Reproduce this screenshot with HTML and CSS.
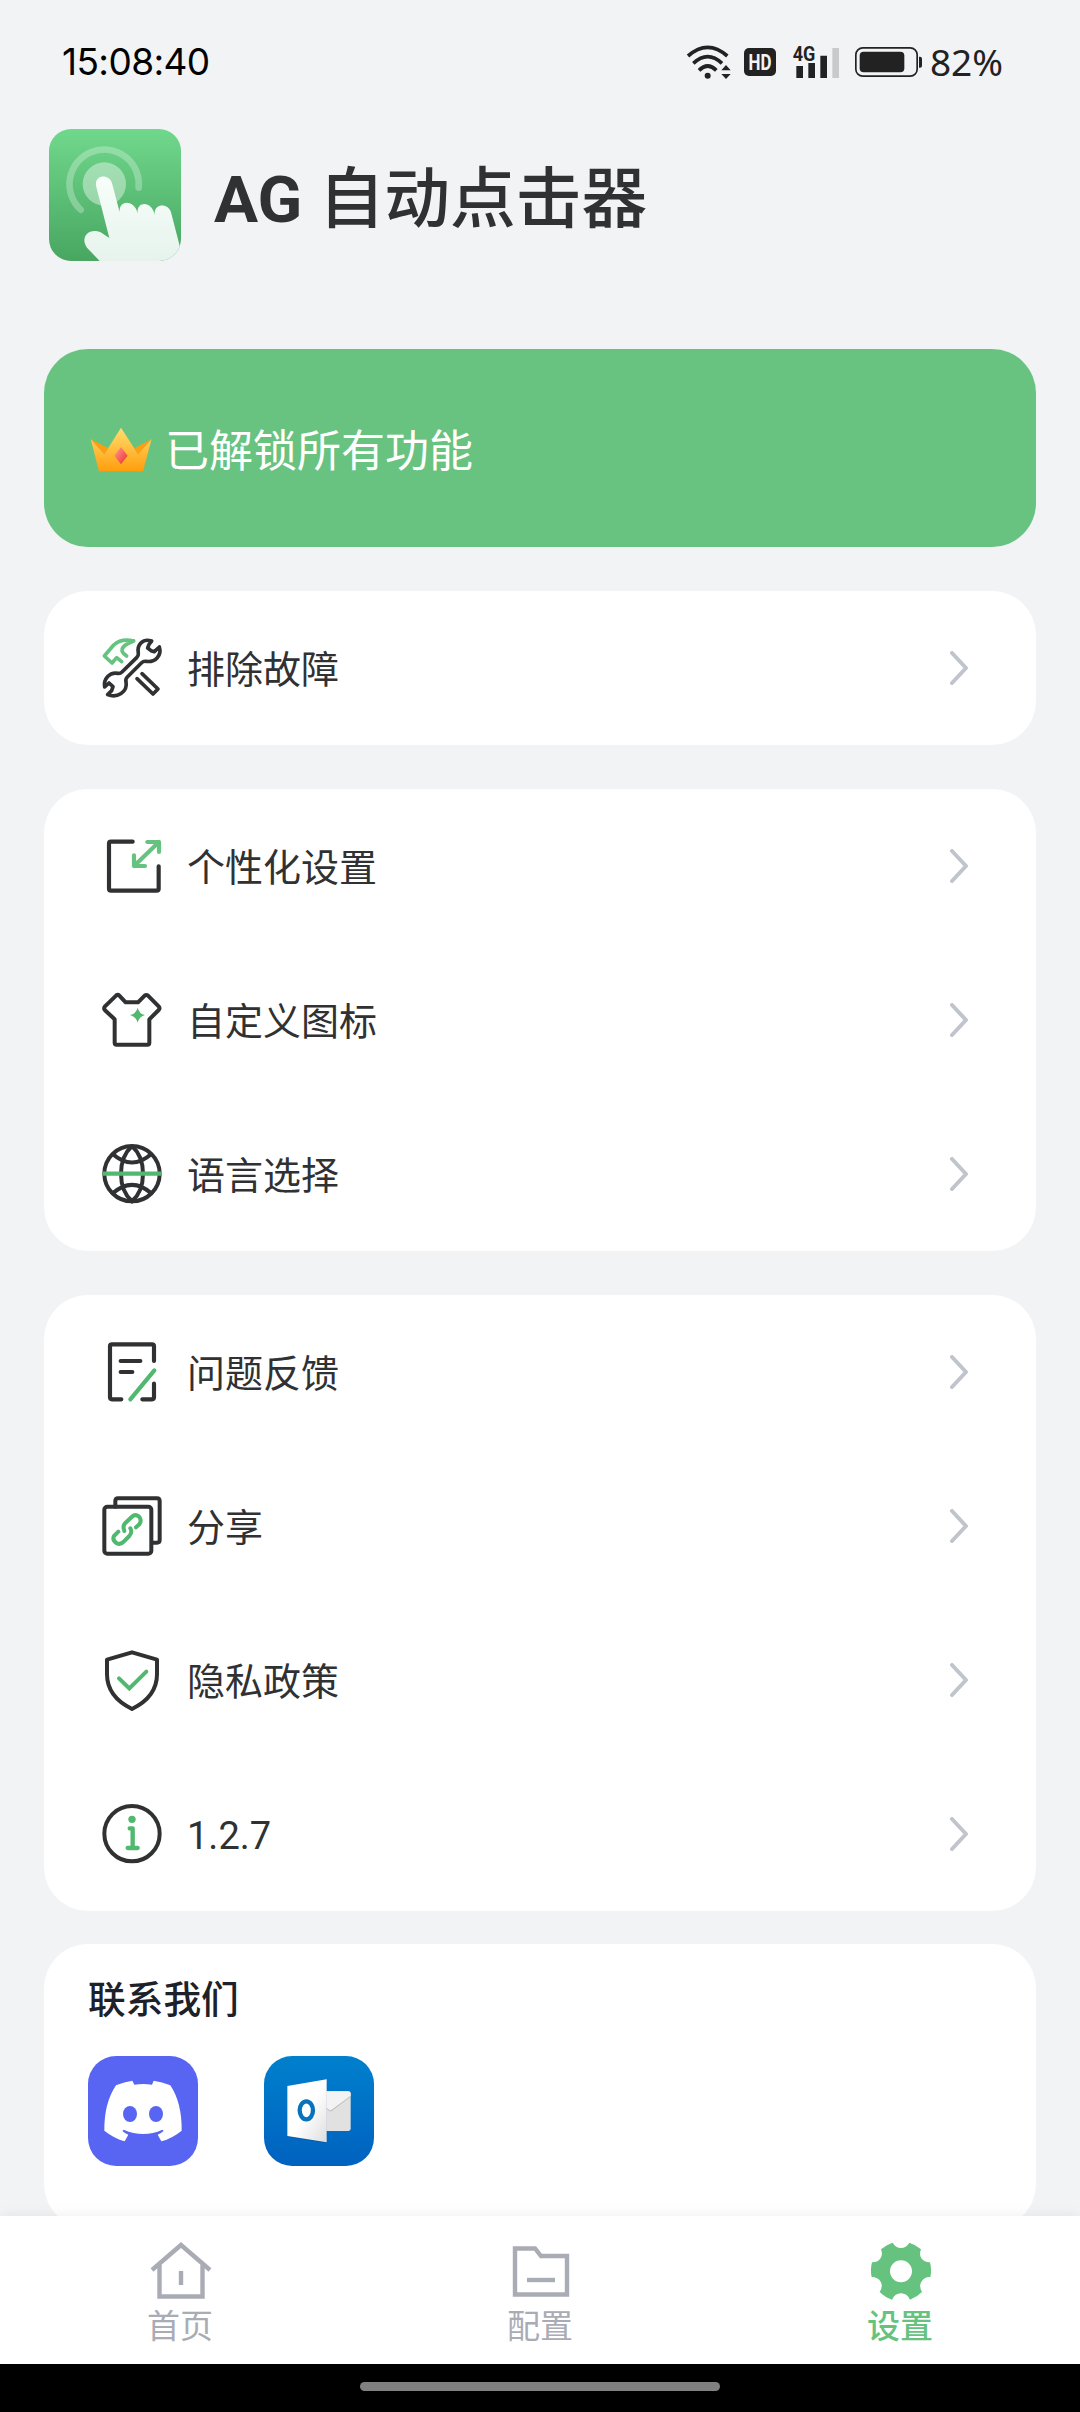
FILE: index.html
```html
<!DOCTYPE html>
<html lang="zh-CN">
<head>
<meta charset="utf-8">
<title>AG 自动点击器</title>
<link rel="stylesheet" href="styles.css">
</head>
<body>
<div class="status">
  <span class="time">15:08:40</span>
  <div class="status-icons">
    <svg class="wifi" width="44" height="36" viewBox="84 69 132 108">
      <g fill="none" stroke="#222" stroke-width="11"><path d="M87 105Q146 53 205 105"/><path d="M103 127Q146 87 189 127"/><path d="M120 148Q146 122 172 148"/></g>
      <circle cx="146" cy="164" r="9" fill="#222"/><path d="M187 148L201 132L215 148ZM187 159L201 174L215 159Z" fill="#222"/>
    </svg>
    <svg class="hd" width="32" height="28" viewBox="0 0 32 28"><rect width="32" height="28" rx="5" fill="#222"/><text x="16" y="21.500" textLength="23" lengthAdjust="spacingAndGlyphs" class="hd-text">HD</text></svg>
    <svg class="signal" width="46" height="34" viewBox="402 72 138 102"><path d="M412 135h20v36h-20zM448 126h20v45h-20zM484 104h20v67h-20z" fill="#222"/><path d="M520 81h20v90h-20z" fill="#c9cacc"/><text x="401" y="120" textLength="68" lengthAdjust="spacingAndGlyphs" class="net-text">4G</text></svg>
    <svg class="battery" width="67" height="30" viewBox="588 81 201 90"><rect x="590.500" y="83.500" width="184" height="85" rx="21" fill="none" stroke="#222" stroke-width="5"/><rect x="602" y="95" width="134" height="62" rx="12" fill="#222"/><path d="M780 110h3q6 0 6 6v21q0 6-6 6h-3z" fill="#222"/></svg>
    <span class="percent">82%</span>
  </div>
</div>

<header class="header">
  <svg class="app-icon" viewBox="57 87 396 396">
    <defs>
      <linearGradient id="appbg" x1="0" y1="0" x2="0" y2="1"><stop offset="0" stop-color="#70d88c"/><stop offset="1" stop-color="#48a661"/></linearGradient>
      <linearGradient id="hand" x1="0" y1="0" x2="0" y2="1"><stop offset="0" stop-color="#f8fefa"/><stop offset="1" stop-color="#e6f3ec"/></linearGradient>
    </defs>
    <rect x="57" y="87" width="396" height="396" fill="url(#appbg)"/>
    <circle cx="223" cy="252" r="65" fill="#fff" fill-opacity=".4"/>
    <path d="M152 329A104 104 0 1 1 326 263" fill="none" stroke="#fff" stroke-opacity=".28" stroke-width="20" stroke-linecap="round"/>
    <path d="M198 257C193 225 236 219 246 249L269 337C265 300 314 297 323 341C318 303 366 301 374 345C370 308 416 309 423 337L449 437V483H209L171 443C149 413 176 381 212 397L238 414Z" fill="url(#hand)"/>
    <path d="M449 437L453 425V483H449Z" fill="#e8f4ed"/>
  </svg>
  <h1 class="title"><span class="brand">AG</span> 自动点击器</h1>
</header>

<main class="content">
  <section class="banner">
    <svg class="crown" width="62" height="46" viewBox="151 255 186 138">
      <defs>
        <linearGradient id="gold" x1="0" y1="0" x2="0" y2="1"><stop offset="0" stop-color="#ffdf70"/><stop offset="1" stop-color="#ff9d0c"/></linearGradient>
        <linearGradient id="ruby" x1="0" y1="0" x2="1" y2="1"><stop offset=".2" stop-color="#ff8585"/><stop offset=".9" stop-color="#e93a2f"/></linearGradient>
      </defs>
      <path d="M178 388L153 291L194 336L244 257L295 336L336 291L310 388Z" fill="url(#gold)"/>
      <path d="M153 291L206 319L194 336ZM336 291L284 319L295 336Z" fill="#fd9e13"/>
      <path d="M244 315L264 341L244 367L224 341Z" fill="url(#ruby)"/>
    </svg>
    <span class="banner-text">已解锁所有功能</span>
  </section>

  <section class="card">
    <div class="row">
      <svg class="icon" viewBox="57 135 198 198">
        <g fill="none" stroke-linecap="round" stroke-linejoin="round" stroke-width="11">
          <path class="g" d="M161 153C130 145 111 156 101 165L73 198L96 219L110 203L125 215M161 153C143 160 127 167 126 180Q125 187 140 198"/>
          <path class="d" d="M215 153C188 144 170 165 175 190Q176 197 170 203L126 246Q121 251 114 250C87 246 70 268 74 291L87 279L99 290L95 302L83 314C111 325 144 307 138 275Q136 267 142 261L184 219Q190 213 198 214C227 218 246 195 238 171L223 185L213 182L203 174L207 163Z"/>
          <path class="d" d="M186 251L234 297L219 312L171 266"/>
        </g>
      </svg>
      <span class="label">排除故障</span>
      <svg class="chev" viewBox="0 0 20 34"><path d="M3 2L17 17L3 32"/></svg>
    </div>
  </section>

  <section class="card">
    <div class="row">
      <svg class="icon" viewBox="57 729 198 198">
        <g fill="none" stroke-linecap="round" stroke-linejoin="round" stroke-width="12.500">
          <path class="d" d="M158 755H93Q87 755 87 761V896Q87 902 93 902H230Q236 902 236 896V829"/>
          <path class="g" d="M202 756H237V786M237 756L162 828M162 796V828H195"/>
        </g>
      </svg>
      <span class="label">个性化设置</span>
      <svg class="chev" viewBox="0 0 20 34"><path d="M3 2L17 17L3 32"/></svg>
    </div>
    <div class="row">
      <svg class="icon" viewBox="57 51 198 198">
        <path class="d" fill="none" stroke-width="12" stroke-linejoin="round" d="M109 76Q114 73 118 77L137 97H174L194 77Q199 73 204 77L236 109Q241 115 236 120L208 148V218Q208 224 202 224H110Q104 224 104 218V148L75 121Q70 115 75 109Z"/>
        <path d="M173 113Q177 131 195 135Q177 140 173 158Q168 140 150 135Q168 131 173 113Z" fill="#50b86f"/>
      </svg>
      <span class="label">自定义图标</span>
      <svg class="chev" viewBox="0 0 20 34"><path d="M3 2L17 17L3 32"/></svg>
    </div>
    <div class="row">
      <svg class="icon" viewBox="57 513 198 198">
        <g class="d" fill="none" stroke-width="12">
          <circle cx="156" cy="611" r="83"/><path d="M156 528C112 568 112 654 156 694C200 654 200 568 156 528M98 552Q156 603 214 552M98 670Q156 619 214 670"/>
        </g>
        <path d="M68 611H245" stroke="#50b86f" stroke-width="13"/>
      </svg>
      <span class="label">语言选择</span>
      <svg class="chev" viewBox="0 0 20 34"><path d="M3 2L17 17L3 32"/></svg>
    </div>
  </section>

  <section class="card">
    <div class="row">
      <svg class="icon" viewBox="57 87 198 198">
        <g fill="none" stroke-linecap="round" stroke-linejoin="round" stroke-width="12.500">
          <path class="d" d="M124 268H96Q90 268 90 262V109Q90 103 96 103H216Q222 103 222 109V153M222 221V262Q222 268 216 268H187M122 153H181M122 186H157"/>
          <path class="g2" d="M223 181L151 268"/>
        </g>
      </svg>
      <span class="label">问题反馈</span>
      <svg class="chev" viewBox="0 0 20 34"><path d="M3 2L17 17L3 32"/></svg>
    </div>
    <div class="row">
      <svg class="icon" viewBox="57 549 198 198">
        <g fill="none" stroke-linecap="round" stroke-linejoin="round" stroke-width="12">
          <path class="d" d="M106 590V573Q106 565 114 565H231Q239 565 239 573V690Q239 698 231 698H216"/><rect class="d" x="73" y="590" width="141" height="141" rx="9"/>
          <path class="g2" d="M133 663Q127 648 136 639L155 621Q166 611 176 619Q187 629 178 643L168 652M151 655Q158 667 148 678L132 694Q121 706 109 699Q96 690 102 678L115 665"/>
        </g>
      </svg>
      <span class="label">分享</span>
      <svg class="chev" viewBox="0 0 20 34"><path d="M3 2L17 17L3 32"/></svg>
    </div>
    <div class="row">
      <svg class="icon" viewBox="57 81 198 198">
        <path class="d" fill="none" stroke-width="12" stroke-linejoin="round" d="M156 97L231 119V163C231 215 197 247 156 267C115 247 81 215 81 163V119Z"/>
        <path class="g2" fill="none" stroke-width="12" stroke-linecap="round" d="M117 175L148 205L199 155"/>
      </svg>
      <span class="label">隐私政策</span>
      <svg class="chev" viewBox="0 0 20 34"><path d="M3 2L17 17L3 32"/></svg>
    </div>
    <div class="row">
      <svg class="icon" viewBox="57 543 198 198">
        <circle class="d" cx="156" cy="641" r="83" fill="none" stroke-width="12"/><circle cx="156" cy="598" r="11" fill="#50b86f"/>
        <path class="g2" fill="none" stroke-width="13" stroke-linecap="round" stroke-linejoin="round" d="M149 625H158V684M143 684H173"/>
      </svg>
      <span class="label">1.2.7</span>
      <svg class="chev" viewBox="0 0 20 34"><path d="M3 2L17 17L3 32"/></svg>
    </div>
  </section>

  <section class="card contact">
    <h2 class="contact-title">联系我们</h2>
    <div class="apps">
      <svg class="app" viewBox="174 408 330 330">
        <rect x="174" y="408" width="330" height="330" fill="#5865f2"/>
        <path fill="#fff" d="M258 496Q283 485 307 482L313 494Q340 490 366 494L371 482Q396 485 421 496Q456 549 455 632Q427 655 394 664L383 644Q394 639 401 633L397 629Q340 655 281 629L277 633Q284 639 295 644L284 664Q252 655 223 632Q222 550 258 496Z"/>
        <ellipse cx="300" cy="582" rx="21" ry="24" fill="#5865f2"/><ellipse cx="378" cy="582" rx="21" ry="24" fill="#5865f2"/>
      </svg>
      <svg class="app" viewBox="702 408 330 330">
        <defs>
          <linearGradient id="outbg" x1="0" y1="0" x2="0" y2="1"><stop offset="0" stop-color="#0080cd"/><stop offset="1" stop-color="#0062bf"/></linearGradient>
          <linearGradient id="door" x1="0" y1="0" x2="1" y2="1"><stop offset=".5" stop-color="#fff"/><stop offset="1" stop-color="#dedede"/></linearGradient>
        </defs>
        <rect x="702" y="408" width="330" height="330" fill="url(#outbg)"/>
        <rect x="870" y="514" width="92" height="119" rx="8" fill="#e1e1e1"/>
        <path d="M882 514H954Q962 514 962 522V530L905 573Q901 575 897 572L882 561Z" fill="#bbb"/>
        <path d="M882 514H954Q962 514 962 522V527L905 569Q901 572 897 569L882 558Z" fill="#f3f3f3"/>
        <path d="M772 500L890 481V670L772 651Z" fill="#003f86" fill-opacity=".3"/>
        <path d="M772 498L890 478V667L772 648Z" fill="url(#door)"/>
        <ellipse cx="829" cy="571" rx="20" ry="27" fill="none" stroke="#0873bd" stroke-width="13"/>
      </svg>
    </div>
  </section>
</main>

<nav class="nav">
  <div class="tab">
    <svg class="tab-icon" viewBox="0 0 62 60"><g fill="none" stroke="#a9acb4" stroke-width="4.400"><path d="M2 29L31 4L60 29"/><path d="M9.500 24V55.500H52.500V24"/><path d="M31 30V44"/></g></svg>
    <span>首页</span>
  </div>
  <div class="tab">
    <svg class="tab-icon" viewBox="0 0 62 60"><g fill="none" stroke="#a9acb4" stroke-width="4.400"><path d="M5 7.500H25L31 15H57V53.500H5Z"/><path d="M17 39H45"/></g></svg>
    <span>配置</span>
  </div>
  <div class="tab active">
    <svg class="tab-icon" viewBox="150 122 186 180">
      <path fill="#66c37f" fill-rule="evenodd" d="M183 147Q198 133 218 127Q227 143 243 143Q259 143 268 127Q288 133 303 147Q297 163 304 174Q314 187 330 186Q336 208 331 230Q313 229 304 244Q296 258 306 275Q291 290 270 298Q261 279 243 279Q225 279 216 298Q195 291 179 275Q190 259 182 244Q173 230 155 230Q150 208 156 186Q173 187 182 173Q189 161 183 147ZM243 180A33 33 0 1 0 243 246A33 33 0 1 0 243 180Z"/>
    </svg>
    <span>设置</span>
  </div>
</nav>
<div class="gesture"><div class="pill"></div></div>
</body>
</html>
```
FILE: styles.css
```css
* { box-sizing: border-box; margin: 0; padding: 0; }
svg { display: block; flex: none; }
body {
  width: 1080px;
  height: 2412px;
  display: flex;
  flex-direction: column;
  overflow: hidden;
  background: #f1f3f5;
  color: #303133;
  font-family: Roboto, "Noto Sans CJK SC", sans-serif;
}
.status {
  height: 125px;
  padding: 0 77px 1px 62px;
  display: flex;
  justify-content: space-between;
  align-items: center;
}
.time { font: 37px/44px Inter, sans-serif; letter-spacing: -.6px; color: #000; }
.status-icons { display: flex; align-items: center; color: #222; }
.status-icons svg { overflow: visible; }
.hd { margin-left: 13px; }
.hd-text { font: 700 22px Roboto, sans-serif; fill: #f1f3f5; text-anchor: middle; }
.signal { margin-left: 17px; }
.net-text { font: 700 60px Roboto, sans-serif; fill: #222; stroke: #f1f3f5; stroke-width: 6px; paint-order: stroke; }
.battery { margin-left: 16px; }
.percent { margin-left: 8px; font: 37px/44px "Noto Sans", sans-serif; }

.header { height: 224px; padding: 4px 49px 0; display: flex; align-items: flex-start; gap: 33px; }
.app-icon { width: 132px; height: 132px; border-radius: 22px; }
.title { font-size: 65.700px; line-height: 78px; font-weight: 500; margin-top: 32px; white-space: nowrap; }
.brand { font-weight: 700; }

.content { flex: 1; min-height: 0; overflow: hidden; padding: 0 44px; display: flex; flex-direction: column; gap: 44px; }
.banner {
  flex: none;
  height: 198px;
  border-radius: 44px;
  background: #68c380;
  color: #fff;
  font-size: 44px;
  display: flex;
  align-items: center;
  gap: 13px;
  padding: 4px 46px 0;
}
.banner-text { padding-bottom: 4px; }
.card { flex: none; border-radius: 44px; background: #fff; }
.row { height: 154px; padding: 0 67px 0 55px; display: flex; align-items: center; }
.icon { width: 66px; height: 66px; margin-right: 22px; }
.label { flex: 1; font-size: 38px; line-height: 50px; padding-top: 4px; }
.chev { width: 20px; height: 34px; fill: none; stroke: #c0c4cc; stroke-width: 4; stroke-linecap: round; stroke-linejoin: round; }
.d { stroke: #303133; }
.g { stroke: #66c37f; }
.g2 { stroke: #50b86f; }

.contact { height: 284px; margin-top: -11px; padding: 31px 44px; }
.contact-title { font-size: 37.700px; line-height: 50px; font-weight: 500; color: #1d2129; }
.apps { display: flex; gap: 66px; margin-top: 31px; }
.app { width: 110px; height: 110px; border-radius: 28px; }

.nav { position: relative; height: 148px; flex: none; display: flex; background: #fff; box-shadow: 0 0 14px rgba(0, 0, 0, .07); }
.tab { flex: 1; display: flex; flex-direction: column; align-items: center; padding-top: 25px; color: #a9acb4; font-size: 33px; line-height: 44px; }
.tab-icon { width: 62px; height: 60px; margin-left: 2px; }
.tab span { margin-top: 4px; }
.active { color: #66c37f; font-weight: 500; }
.gesture { position: relative; height: 48px; flex: none; background: #000; display: flex; justify-content: center; padding-top: 18px; }
.pill { width: 360px; height: 9px; border-radius: 5px; background: #808080; }
```
